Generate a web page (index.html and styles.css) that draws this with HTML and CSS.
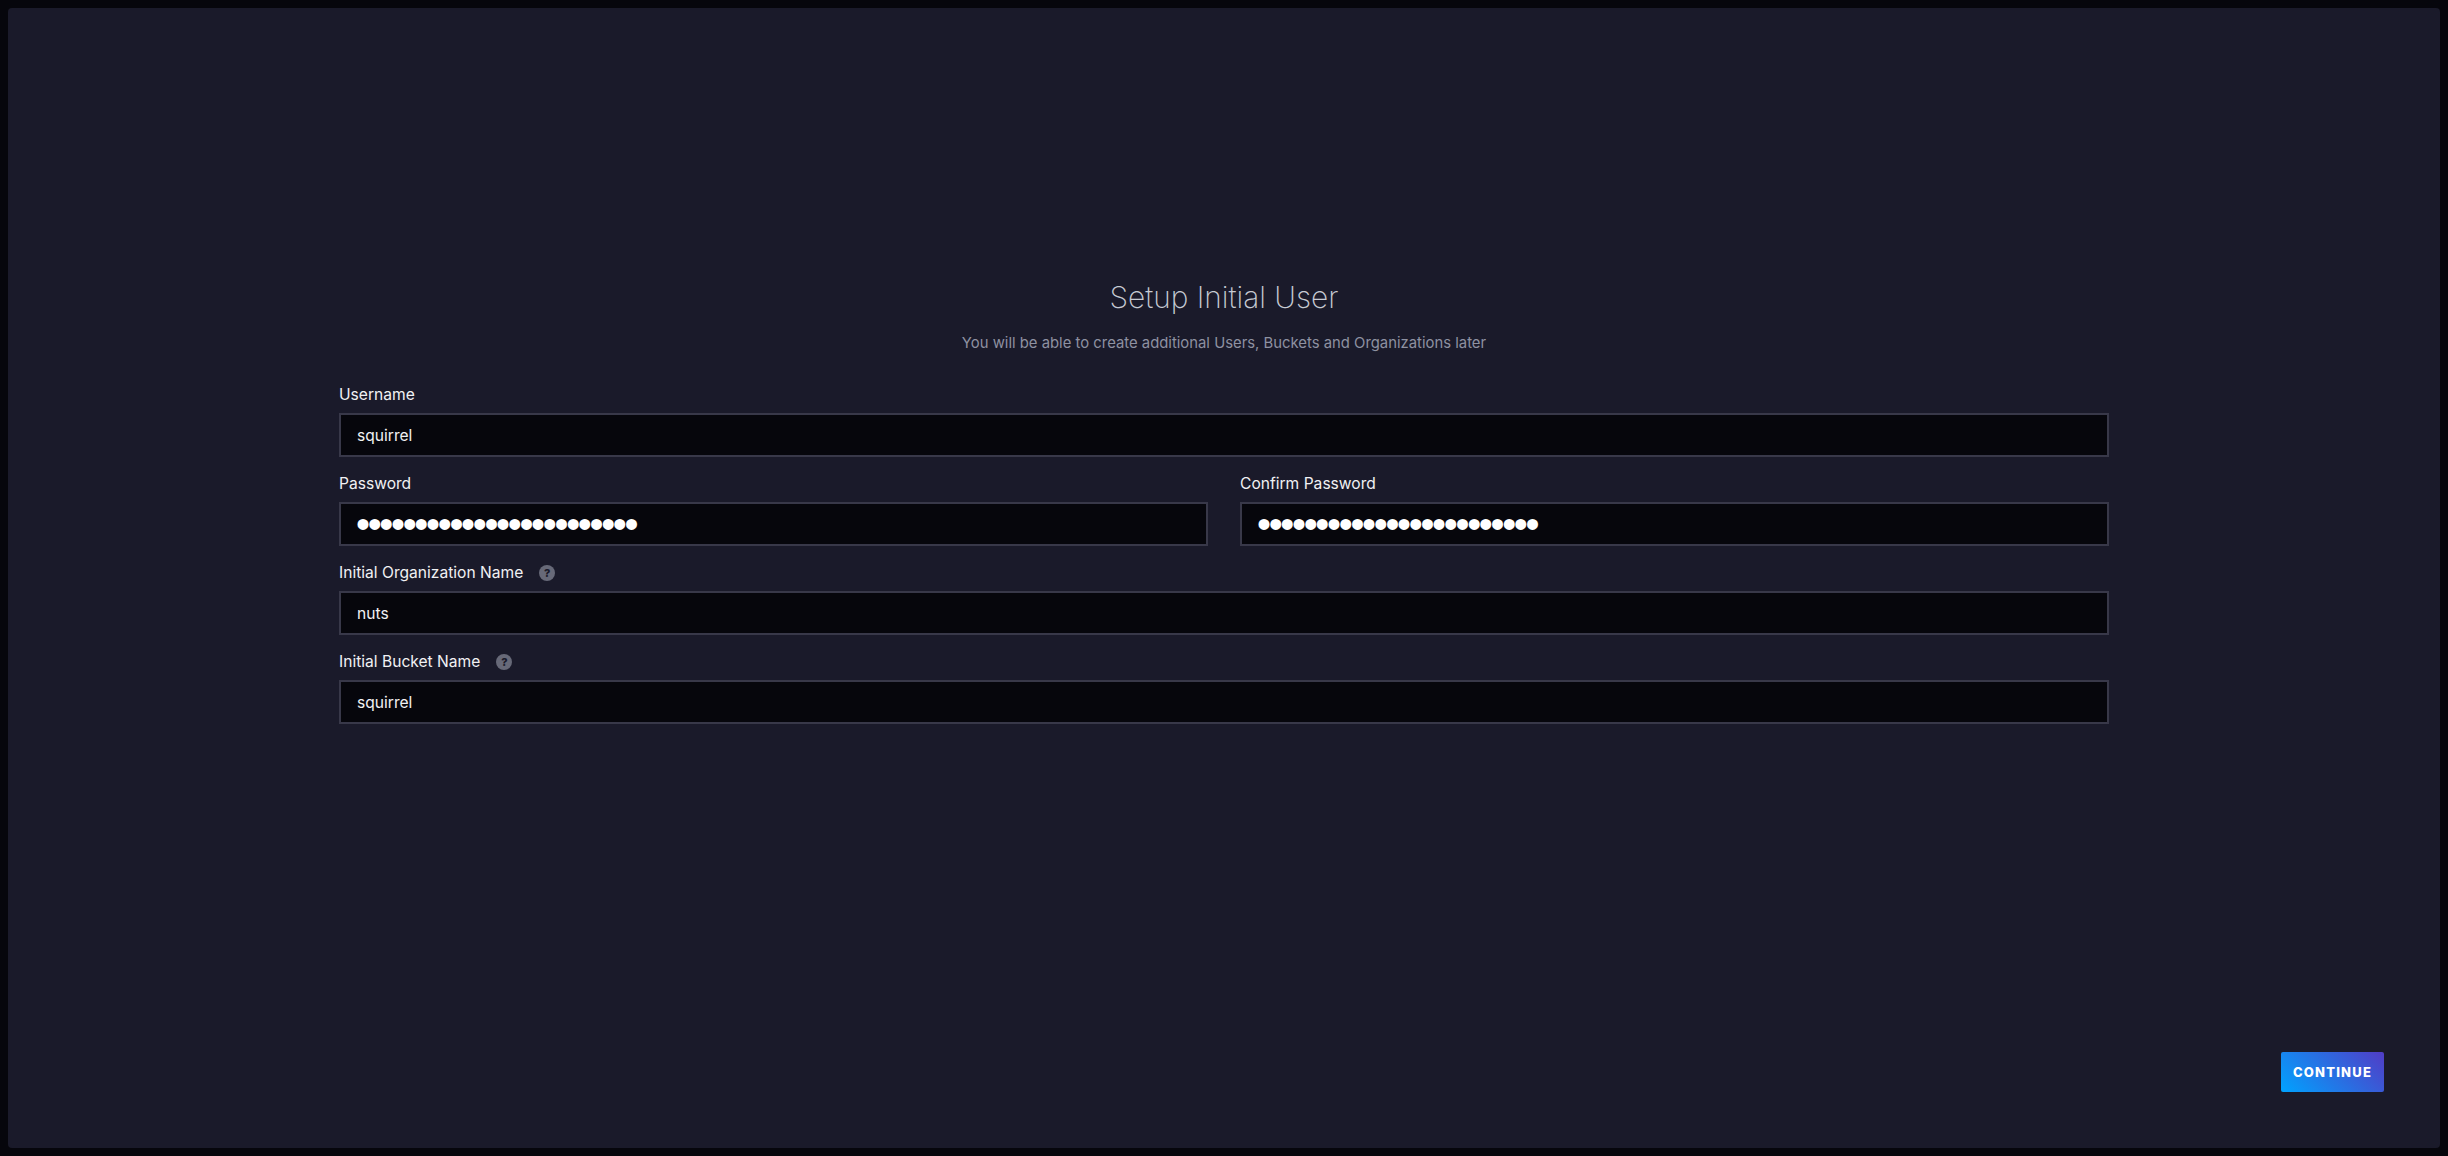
FILE: index.html
```html
<!DOCTYPE html>
<html lang="en">
<head>
  <meta charset="UTF-8" />
  <title>Setup Initial User</title>
  <link rel="stylesheet" href="styles.css">
</head>
<body>
  <div class="panel">
    <div class="setup">
      <h2 class="title">Setup Initial User</h2>
      <p class="subtitle">You will be able to create additional Users, Buckets and Organizations later</p>

      <form class="setup-form">
        <div class="field wide">
          <label for="username">Username</label>
          <input type="text" id="username" value="squirrel" />
        </div>
        <div class="field">
          <label for="password">Password</label>
          <input type="password" id="password" value="xxxxxxxxxxxxxxxxxxxxxxxx" />
        </div>
        <div class="field">
          <label for="confirm">Confirm Password</label>
          <input type="password" id="confirm" value="xxxxxxxxxxxxxxxxxxxxxxxx" />
        </div>
        <div class="field wide">
          <label for="org">Initial Organization Name <span class="help">?</span></label>
          <input type="text" id="org" value="nuts" />
        </div>
        <div class="field wide">
          <label for="bucket">Initial Bucket Name <span class="help">?</span></label>
          <input type="text" id="bucket" value="squirrel" />
        </div>
      </form>
    </div>

    <div class="footer">
      <button type="button" class="continue">CONTINUE</button>
    </div>
  </div>
</body>
</html>
```

FILE: styles.css
```css
* {
  box-sizing: border-box;
}

body {
  margin: 0;
  padding: 8px;
  height: 100vh;
  background: #06060c;
  font-family: "Inter", "Liberation Sans", sans-serif;
  color: #f1f1f3;
}

.panel {
  height: 100%;
  padding: 0 56px 56px 331px;
  background: #1a1a2a;
  border-radius: 4px;
  display: flex;
  flex-direction: column;
}

/* Titles */
.setup {
  width: 1770px;
  padding-top: 269px;
}

.title {
  margin: 0;
  font-size: 29.8px;
  line-height: 40px;
  font-weight: 200;
  text-align: center;
  color: #c6cad3;
}

.subtitle {
  margin: 14px 0 0;
  font-size: 14.85px;
  line-height: 24px;
  text-align: center;
  color: #8e91a1;
}

/* Form */
.setup-form {
  margin-top: 29px;
  display: grid;
  grid-template-columns: 1fr 1fr;
  column-gap: 32px;
  row-gap: 16px;
}

.field {
  display: flex;
  flex-direction: column;
}

.field.wide {
  grid-column: span 2;
}

.field label {
  height: 22px;
  margin-bottom: 7px;
  font-size: 15.6px;
  line-height: 22px;
  display: flex;
  align-items: center;
}

.field input {
  height: 44px;
  padding: 0 16px;
  background: #06060c;
  border: 2px solid #383849;
  border-radius: 0;
  outline: none;
  font-family: inherit;
  font-size: 15.6px;
  color: #f1f1f3;
}

.field input[type="password"] {
  padding-left: 15px;
  font-family: "Liberation Sans", sans-serif;
  font-size: 40px;
  letter-spacing: -2.33px;
  color: #fff;
}

.help {
  width: 16px;
  height: 16px;
  margin-left: 16px;
  border-radius: 50%;
  background: #676978;
  color: #1a1a2a;
  font-size: 11px;
  font-weight: 800;
  line-height: 16px;
  text-align: center;
}

/* Continue button */
.footer {
  margin-top: auto;
  display: flex;
  justify-content: flex-end;
}

.continue {
  width: 103px;
  height: 40px;
  padding: 0;
  border: none;
  border-radius: 2px;
  background: linear-gradient(45deg, #00a3ff 0%, #513cc6 100%);
  color: #fff;
  font-family: "Inter", sans-serif;
  font-size: 13px;
  font-weight: 800;
  letter-spacing: 1.2px;
}
```
